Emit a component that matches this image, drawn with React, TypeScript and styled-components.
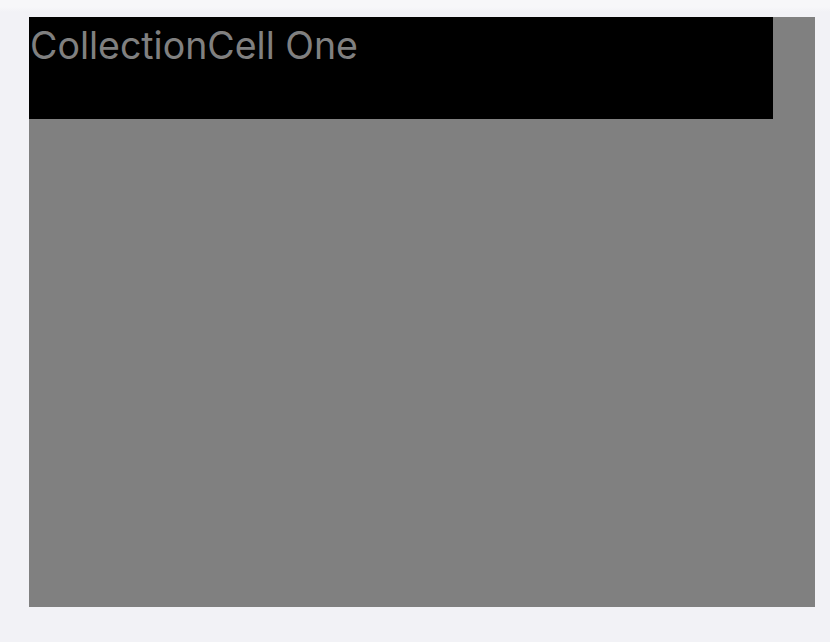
import React from 'react';
import styled, { createGlobalStyle } from 'styled-components';

const GlobalStyle = createGlobalStyle`
  html, body {
    margin: 0;
    padding: 0;
    background: #f2f2f6;
  }
  * {
    box-sizing: border-box;
  }
`;

export default function App() {
  return (
    <>
      <GlobalStyle />
      <Screen>
        <TopEdge />
        <Collection>
          <Cell>
            <CellTitle>CollectionCell One</CellTitle>
          </Cell>
        </Collection>
      </Screen>
    </>
  );
}

const Screen = styled.div`
  width: 830px;
  height: 642px;
  background: #f2f2f6;
  display: flex;
  flex-direction: column;
  padding-left: 29px;
`;

/* faint highlight along the top edge */
const TopEdge = styled.div`
  height: 17px;
  margin-left: -29px;
  background: linear-gradient(to bottom, #f7f7f9 0px, #f7f7f9 7px, #f2f2f6 12px);
`;

const Collection = styled.div`
  width: 786px;
  height: 590px;
  background: #808080;
`;

const Cell = styled.div`
  width: 744px;
  height: 102px;
  background: #000000;
`;

const CellTitle = styled.div`
  font-family: Inter, 'Liberation Sans', sans-serif;
  font-size: 37.5px;
  line-height: 44px;
  color: #808080;
  padding: 7px 0 0 1px;
  letter-spacing: 0;
`;
